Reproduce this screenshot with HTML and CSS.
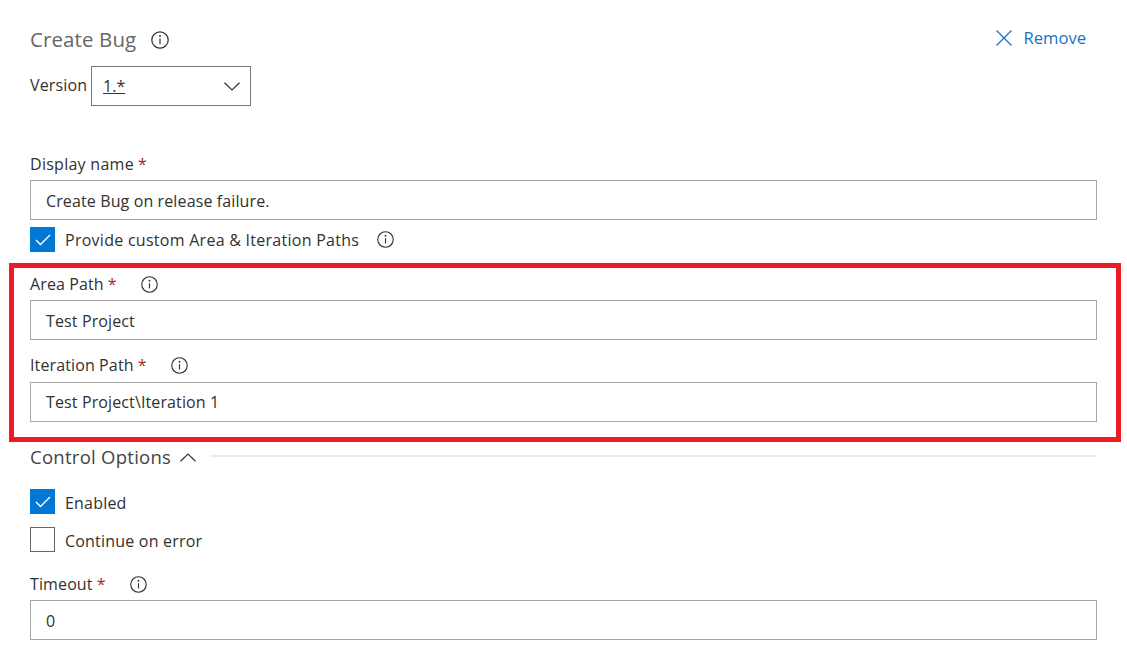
FILE: index.html
```html
<!DOCTYPE html>
<html lang="en">
<head>
<meta charset="utf-8">
<title>Create Bug</title>
<link rel="stylesheet" href="styles.css">
</head>
<body>
<main class="form">
  <header class="title-row">
    <h1 class="title">Create Bug</h1>
    <svg class="info info-lg" viewBox="0 0 18 18"><circle cx="9" cy="9" r="8.2"/><path d="M9 7.6v5.6"/><circle class="dot" cx="9" cy="5" r="1"/></svg>
    <a class="remove">
      <svg class="x-icon" viewBox="0 0 16 16"><path d="M.5.5l15 15M15.5.5l-15 15"/></svg>
      <span>Remove</span>
    </a>
  </header>
  <div class="version-row">
    <span class="version-label">Version</span>
    <div class="select">
      <span class="select-value">1.*</span>
      <svg class="chev" viewBox="0 0 16 9"><path d="M.5.8L8 8l7.5-7.2"/></svg>
    </div>
  </div>

  <div class="label-row label-display"><span>Display name</span> <span class="req">*</span></div>
  <div class="input">Create Bug on release failure.</div>
  <div class="check-row check-custom">
    <span class="box on"><svg viewBox="0 0 16 12"><path d="M1 6l4.5 4.5L15 1"/></svg></span>
    <span>Provide custom Area &amp; Iteration Paths</span>
    <svg class="info info-custom" viewBox="0 0 18 18"><circle cx="9" cy="9" r="8.2"/><path d="M9 7.6v5.6"/><circle class="dot" cx="9" cy="5" r="1"/></svg>
  </div>

  <section class="highlight">
    <div class="label-row label-area"><span>Area Path</span> <span class="req">*</span>
      <svg class="info info-field" viewBox="0 0 18 18"><circle cx="9" cy="9" r="8.2"/><path d="M9 7.6v5.6"/><circle class="dot" cx="9" cy="5" r="1"/></svg>
    </div>
    <div class="input">Test Project</div>
    <div class="label-row label-iter"><span>Iteration Path</span> <span class="req">*</span>
      <svg class="info info-field" viewBox="0 0 18 18"><circle cx="9" cy="9" r="8.2"/><path d="M9 7.6v5.6"/><circle class="dot" cx="9" cy="5" r="1"/></svg>
    </div>
    <div class="input input-tight">Test Project\Iteration 1</div>
  </section>

  <div class="section-head">
    <span class="section-title">Control Options</span>
    <svg class="chev chev-up" viewBox="0 0 16 9"><path d="M.5 8.2L8 1l7.5 7.2"/></svg>
    <span class="section-line"></span>
  </div>

  <div class="check-row check-enabled">
    <span class="box on"><svg viewBox="0 0 16 12"><path d="M1 6l4.5 4.5L15 1"/></svg></span>
    <span class="check-text">Enabled</span>
  </div>
  <div class="check-row check-continue">
    <span class="box"></span>
    <span class="check-text">Continue on error</span>
  </div>

  <div class="label-row label-timeout"><span>Timeout</span> <span class="req">*</span>
    <svg class="info info-field" viewBox="0 0 18 18"><circle cx="9" cy="9" r="8.2"/><path d="M9 7.6v5.6"/><circle class="dot" cx="9" cy="5" r="1"/></svg>
  </div>
  <div class="input">0</div>
</main>
</body>
</html>
```
FILE: styles.css
```css
* { box-sizing: border-box; }
html, body { margin: 0; height: 100%; background: #fff; overflow: hidden; }
body {
  font-family: "Open Sans", "Noto Sans", "Liberation Sans", sans-serif;
  font-size: 16px;
  letter-spacing: 0.27px;
  color: #323130;
}
.form { padding: 0 30px; }

.title-row { display: flex; align-items: center; height: 32px; margin-top: 24px; }
.title { margin: 0; padding-bottom: 2px; font-size: 20.5px; font-weight: 400; letter-spacing: 0.1px; color: #666; line-height: 30px; }
.info { fill: none; stroke: #333; stroke-width: 1.2; flex: none; }
.info .dot { fill: #333; stroke: none; }
.info-lg { width: 18px; height: 18px; margin-left: 15px; }
.remove { display: flex; align-items: center; margin-left: auto; margin-right: 11px; margin-top: -5px; color: #1672c6; font-size: 16.6px; letter-spacing: 0; }
.x-icon { width: 16px; height: 16px; margin-right: 11px; fill: none; stroke: #1672c6; stroke-width: 1.2; }

.version-row { display: flex; align-items: center; height: 40px; margin-top: 10px; }
.version-label { margin-right: 4px; padding-bottom: 2px; letter-spacing: 0.13px; }
.select { display: flex; align-items: center; justify-content: space-between; width: 160px; height: 40px; padding: 0 10px 0 11px; border: 1px solid #777; }
.select-value { text-decoration: underline; letter-spacing: 0; }
.chev { width: 16px; height: 9px; fill: none; stroke: #333; stroke-width: 1.2; flex: none; }

.label-row { display: flex; align-items: center; height: 22px; white-space: pre; letter-spacing: 0.12px; }
.req { color: #a4262c; margin-left: 4px; }
.label-display { margin-top: 47px; margin-bottom: 5px; letter-spacing: 0.27px; }
.info-field { width: 17px; height: 17px; margin-left: 24px; }

.input { display: flex; align-items: center; height: 40px; padding: 1px 0 0 15px; border: 1.5px solid #a6a6a6; letter-spacing: 0.12px; }
.input-tight { padding-top: 0; }

.check-row { display: flex; align-items: center; height: 25px; }
.check-text { padding-top: 2px; letter-spacing: 0.2px; }
.box { display: flex; align-items: center; justify-content: center; width: 25px; height: 25px; margin-right: 10px; border: 1px solid #666; flex: none; }
.box.on { background: #0078d4; border-color: #0078d4; }
.box svg { width: 16px; height: 12px; fill: none; stroke: #fff; stroke-width: 1.4; }
.check-custom { margin-top: 7px; }
.info-custom { width: 17px; height: 17px; margin-left: 18px; }

.highlight { margin: 11px -24px 0 -21px; padding: 5px 19px 15px 16px; border: 5px solid #ed1c24; }
.label-area { margin-bottom: 5px; }
.label-iter { margin-top: 14px; margin-bottom: 6px; }

.section-head { display: flex; align-items: center; height: 30px; }
.section-title { padding-bottom: 2px; font-size: 18.5px; letter-spacing: 0.27px; color: #444; }
.chev-up { margin-left: 9px; }
.section-line { flex: 1; height: 2px; margin: -2px 0 0 14px; background: #ebebeb; }

.check-enabled { margin-top: 17px; }
.check-continue { margin-top: 13px; }
.label-timeout { margin-top: 21px; margin-bottom: 5px; }
```
